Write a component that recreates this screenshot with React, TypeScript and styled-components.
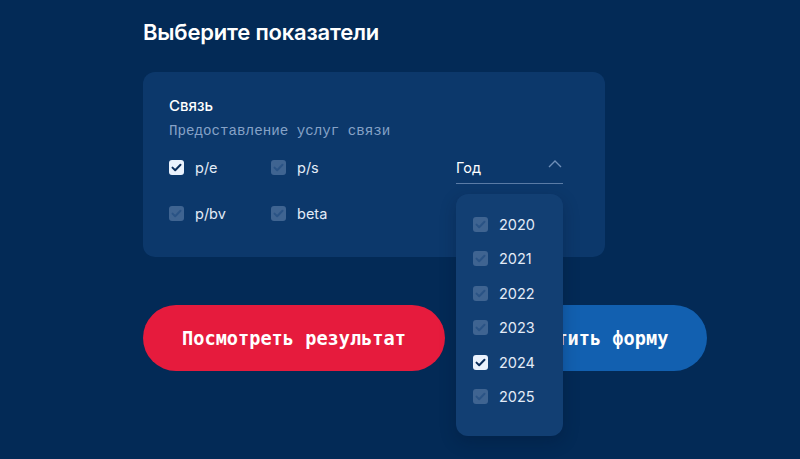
import styled, { createGlobalStyle } from "styled-components";

const GlobalStyle = createGlobalStyle`
  html, body {
    margin: 0;
    padding: 0;
    background: #032a56;
    height: 100%;
  }
  body {
    font-family: Inter, "Noto Sans", sans-serif;
    color: #ffffff;
  }
`;

const metrics = [
  { label: "p/e", checked: true },
  { label: "p/s", checked: false },
  { label: "p/bv", checked: false },
  { label: "beta", checked: false },
];

const years = [
  { label: "2020", checked: false },
  { label: "2021", checked: false },
  { label: "2022", checked: false },
  { label: "2023", checked: false },
  { label: "2024", checked: true },
  { label: "2025", checked: false },
];

function CheckBox({ checked }: { checked: boolean }) {
  return (
    <Box $checked={checked}>
      <svg width="11" height="9" viewBox="0 0 11 9" fill="none">
        <path
          d="M1.5 4.6 L4.2 7.2 L9.5 1.8"
          stroke="currentColor"
          strokeWidth="2"
          strokeLinecap="round"
          strokeLinejoin="round"
        />
      </svg>
    </Box>
  );
}

export default function App() {
  return (
    <>
      <GlobalStyle />
      <Page>
        <Title>Выберите показатели</Title>

        <Card>
          <CardTitle>Связь</CardTitle>
          <CardSubtitle>Предоставление услуг связи</CardSubtitle>

          <CardBody>
            <CheckGrid>
              {metrics.map((m) => (
                <CheckRow key={m.label}>
                  <CheckBox checked={m.checked} />
                  <CheckLabel>{m.label}</CheckLabel>
                </CheckRow>
              ))}
            </CheckGrid>

            <SelectWrap>
              <SelectField>
                <span>Год</span>
                <svg width="14" height="8" viewBox="0 0 14 8" fill="none">
                  <path
                    d="M1 7 L7 1 L13 7"
                    stroke="#6f8fb8"
                    strokeWidth="1.4"
                  />
                </svg>
              </SelectField>

              {/* open list hangs over the card and the buttons */}
              <Dropdown>
                {years.map((y) => (
                  <YearRow key={y.label}>
                    <CheckBox checked={y.checked} />
                    <YearLabel>{y.label}</YearLabel>
                  </YearRow>
                ))}
              </Dropdown>
            </SelectWrap>
          </CardBody>
        </Card>

        <Actions>
          <PillButton $variant="primary" $width={302}>
            Посмотреть результат
          </PillButton>
          <PillButton $variant="secondary" $width={234}>
            Очистить форму
          </PillButton>
        </Actions>
      </Page>
    </>
  );
}

const Page = styled.div`
  padding: 18px 0 0 143px;
  display: flex;
  flex-direction: column;
  align-items: flex-start;
`;

const Title = styled.h1`
  margin: 0;
  font-size: 22px;
  line-height: 28px;
  font-weight: 600;
  letter-spacing: -0.2px;
  color: #ffffff;
`;

const Card = styled.section`
  margin-top: 26px;
  width: 462px;
  box-sizing: border-box;
  padding: 24px 42px 32px 26px;
  background: #0c386b;
  border-radius: 12px;
  display: flex;
  flex-direction: column;
`;

const CardTitle = styled.div`
  font-size: 15px;
  line-height: 20px;
  font-weight: 500;
  color: #ffffff;
`;

const CardSubtitle = styled.div`
  margin-top: 5px;
  font-family: "Liberation Mono", "DejaVu Sans Mono", monospace;
  font-size: 14.2px;
  line-height: 20px;
  color: #86a2c7;
`;

const CardBody = styled.div`
  margin-top: 14px;
  display: flex;
  justify-content: space-between;
  align-items: flex-start;
`;

const CheckGrid = styled.div`
  display: grid;
  grid-template-columns: 102px 102px;
  row-gap: 22px;
`;

const CheckRow = styled.label`
  display: flex;
  align-items: center;
  gap: 12px;
  height: 24px;
`;

const Box = styled.span<{ $checked: boolean }>`
  width: 15px;
  height: 15px;
  flex: none;
  border-radius: 3px;
  display: flex;
  align-items: center;
  justify-content: center;
  background: ${({ $checked }) => ($checked ? "#eaf2fd" : "#3f6491")};
  color: ${({ $checked }) => ($checked ? "#0a2d5a" : "#2a5385")};
`;

const CheckLabel = styled.span`
  font-size: 14.5px;
  color: #e3ebf7;
  margin-left: -1px;
`;

const SelectWrap = styled.div`
  position: relative;
  width: 107px;
`;

const SelectField = styled.div`
  display: flex;
  align-items: center;
  justify-content: space-between;
  height: 24px;
  padding: 0 1px 4px 0;
  border-bottom: 1.5px solid #5b7ca6;
  font-size: 14.5px;
  color: #ffffff;

  svg {
    margin-top: -6px;
  }
`;

const Dropdown = styled.div`
  position: absolute;
  top: 39px;
  left: 0;
  width: 107px;
  height: 242px;
  box-sizing: border-box;
  padding: 13px 0 0 17px;
  background: #123f73;
  border-radius: 12px;
  box-shadow: 0 6px 16px rgba(0, 16, 40, 0.25);
  z-index: 2;
`;

const YearRow = styled.div`
  display: flex;
  align-items: center;
  gap: 11px;
  height: 34.5px;
`;

const YearLabel = styled.span`
  font-size: 14.5px;
  color: #e3ebf7;
`;

const Actions = styled.div`
  margin-top: 48px;
  display: flex;
  gap: 28px;
`;

const PillButton = styled.button<{ $variant: "primary" | "secondary"; $width: number }>`
  width: ${({ $width }) => $width}px;
  height: 66px;
  border: none;
  border-radius: 33px;
  background: ${({ $variant }) => ($variant === "primary" ? "#e61b3d" : "#1260b0")};
  color: #ffffff;
  font-family: "DejaVu Sans Mono", "Liberation Mono", monospace;
  font-weight: 700;
  font-size: 18.6px;
  cursor: pointer;
`;
